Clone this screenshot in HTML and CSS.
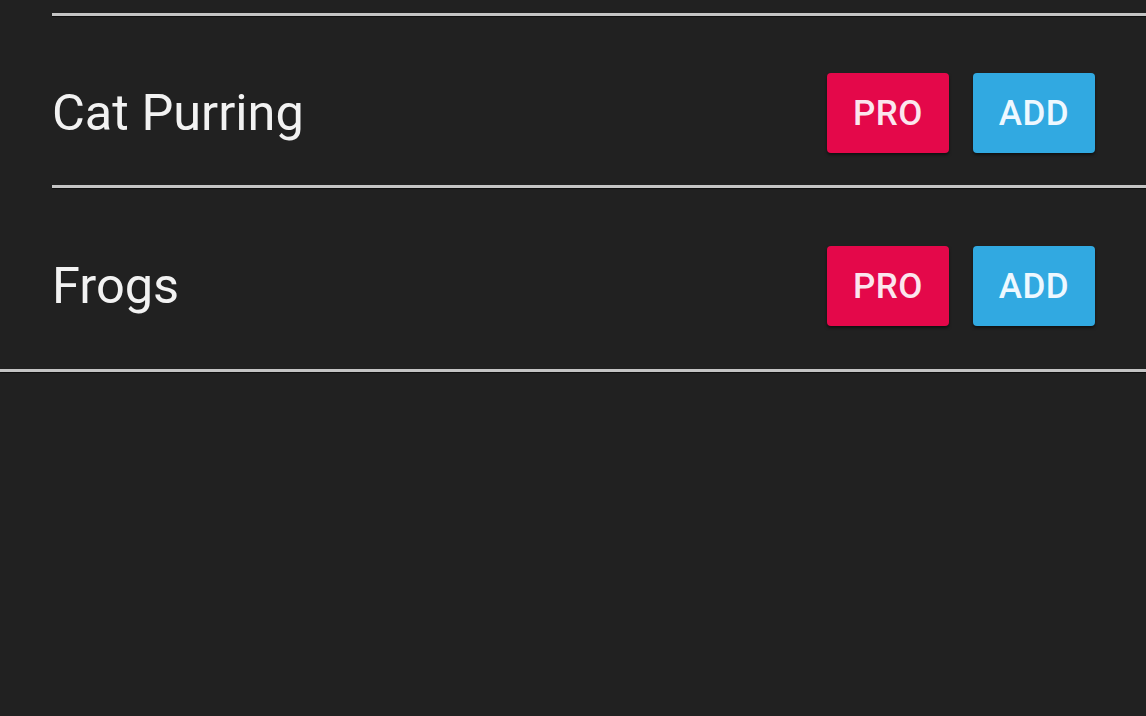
FILE: index.html
```html
<!DOCTYPE html>
<html>
<head>
<meta charset="utf-8">
<link rel="stylesheet" href="styles.css">
</head>
<body>
<div class="list">
  <div class="divider inset"></div>
  <div class="row row-first">
    <span class="label">Cat Purring</span>
    <div class="actions">
      <button class="btn pro">PRO</button>
      <button class="btn add">ADD</button>
    </div>
  </div>
  <div class="divider inset"></div>
  <div class="row row-second">
    <span class="label">Frogs</span>
    <div class="actions">
      <button class="btn pro">PRO</button>
      <button class="btn add">ADD</button>
    </div>
  </div>
  <div class="divider"></div>
</div>
</body>
</html>
```
FILE: styles.css
```css
html, body {
  margin: 0;
  padding: 0;
  background: #212121;
  height: 100%;
}
body {
  font-family: Roboto, "Liberation Sans", sans-serif;
  color: #f2f2f2;
}
.list {
  padding-top: 13px;
  display: flex;
  flex-direction: column;
}
.divider {
  height: 3px;
  background: #c4c4c4;
  box-shadow: 0 1px 1px rgba(0,0,0,0.6);
}
.divider.inset {
  margin-left: 52px;
}
.row {
  display: flex;
  align-items: center;
  justify-content: space-between;
  padding-left: 52px;
  padding-right: 51px;
}
.row-first {
  padding-top: 57px;
  padding-bottom: 32px;
}
.row-second {
  padding-top: 58px;
  padding-bottom: 43px;
}
.label {
  font-size: 50.5px;
  font-weight: 400;
  line-height: 56px;
}
.actions {
  display: flex;
  gap: 24px;
}
.btn {
  width: 122px;
  height: 80px;
  border: none;
  border-radius: 4px;
  font-family: Roboto, "Liberation Sans", sans-serif;
  font-size: 35px;
  font-weight: 500;
  letter-spacing: 0.5px;
  padding: 0;
  box-shadow: 0 2px 3px rgba(0,0,0,0.5);
}
.btn.pro {
  background: #e4084a;
  color: #fbe6ee;
}
.btn.add {
  background: #31a9e1;
  color: #eef8ff;
}
```
